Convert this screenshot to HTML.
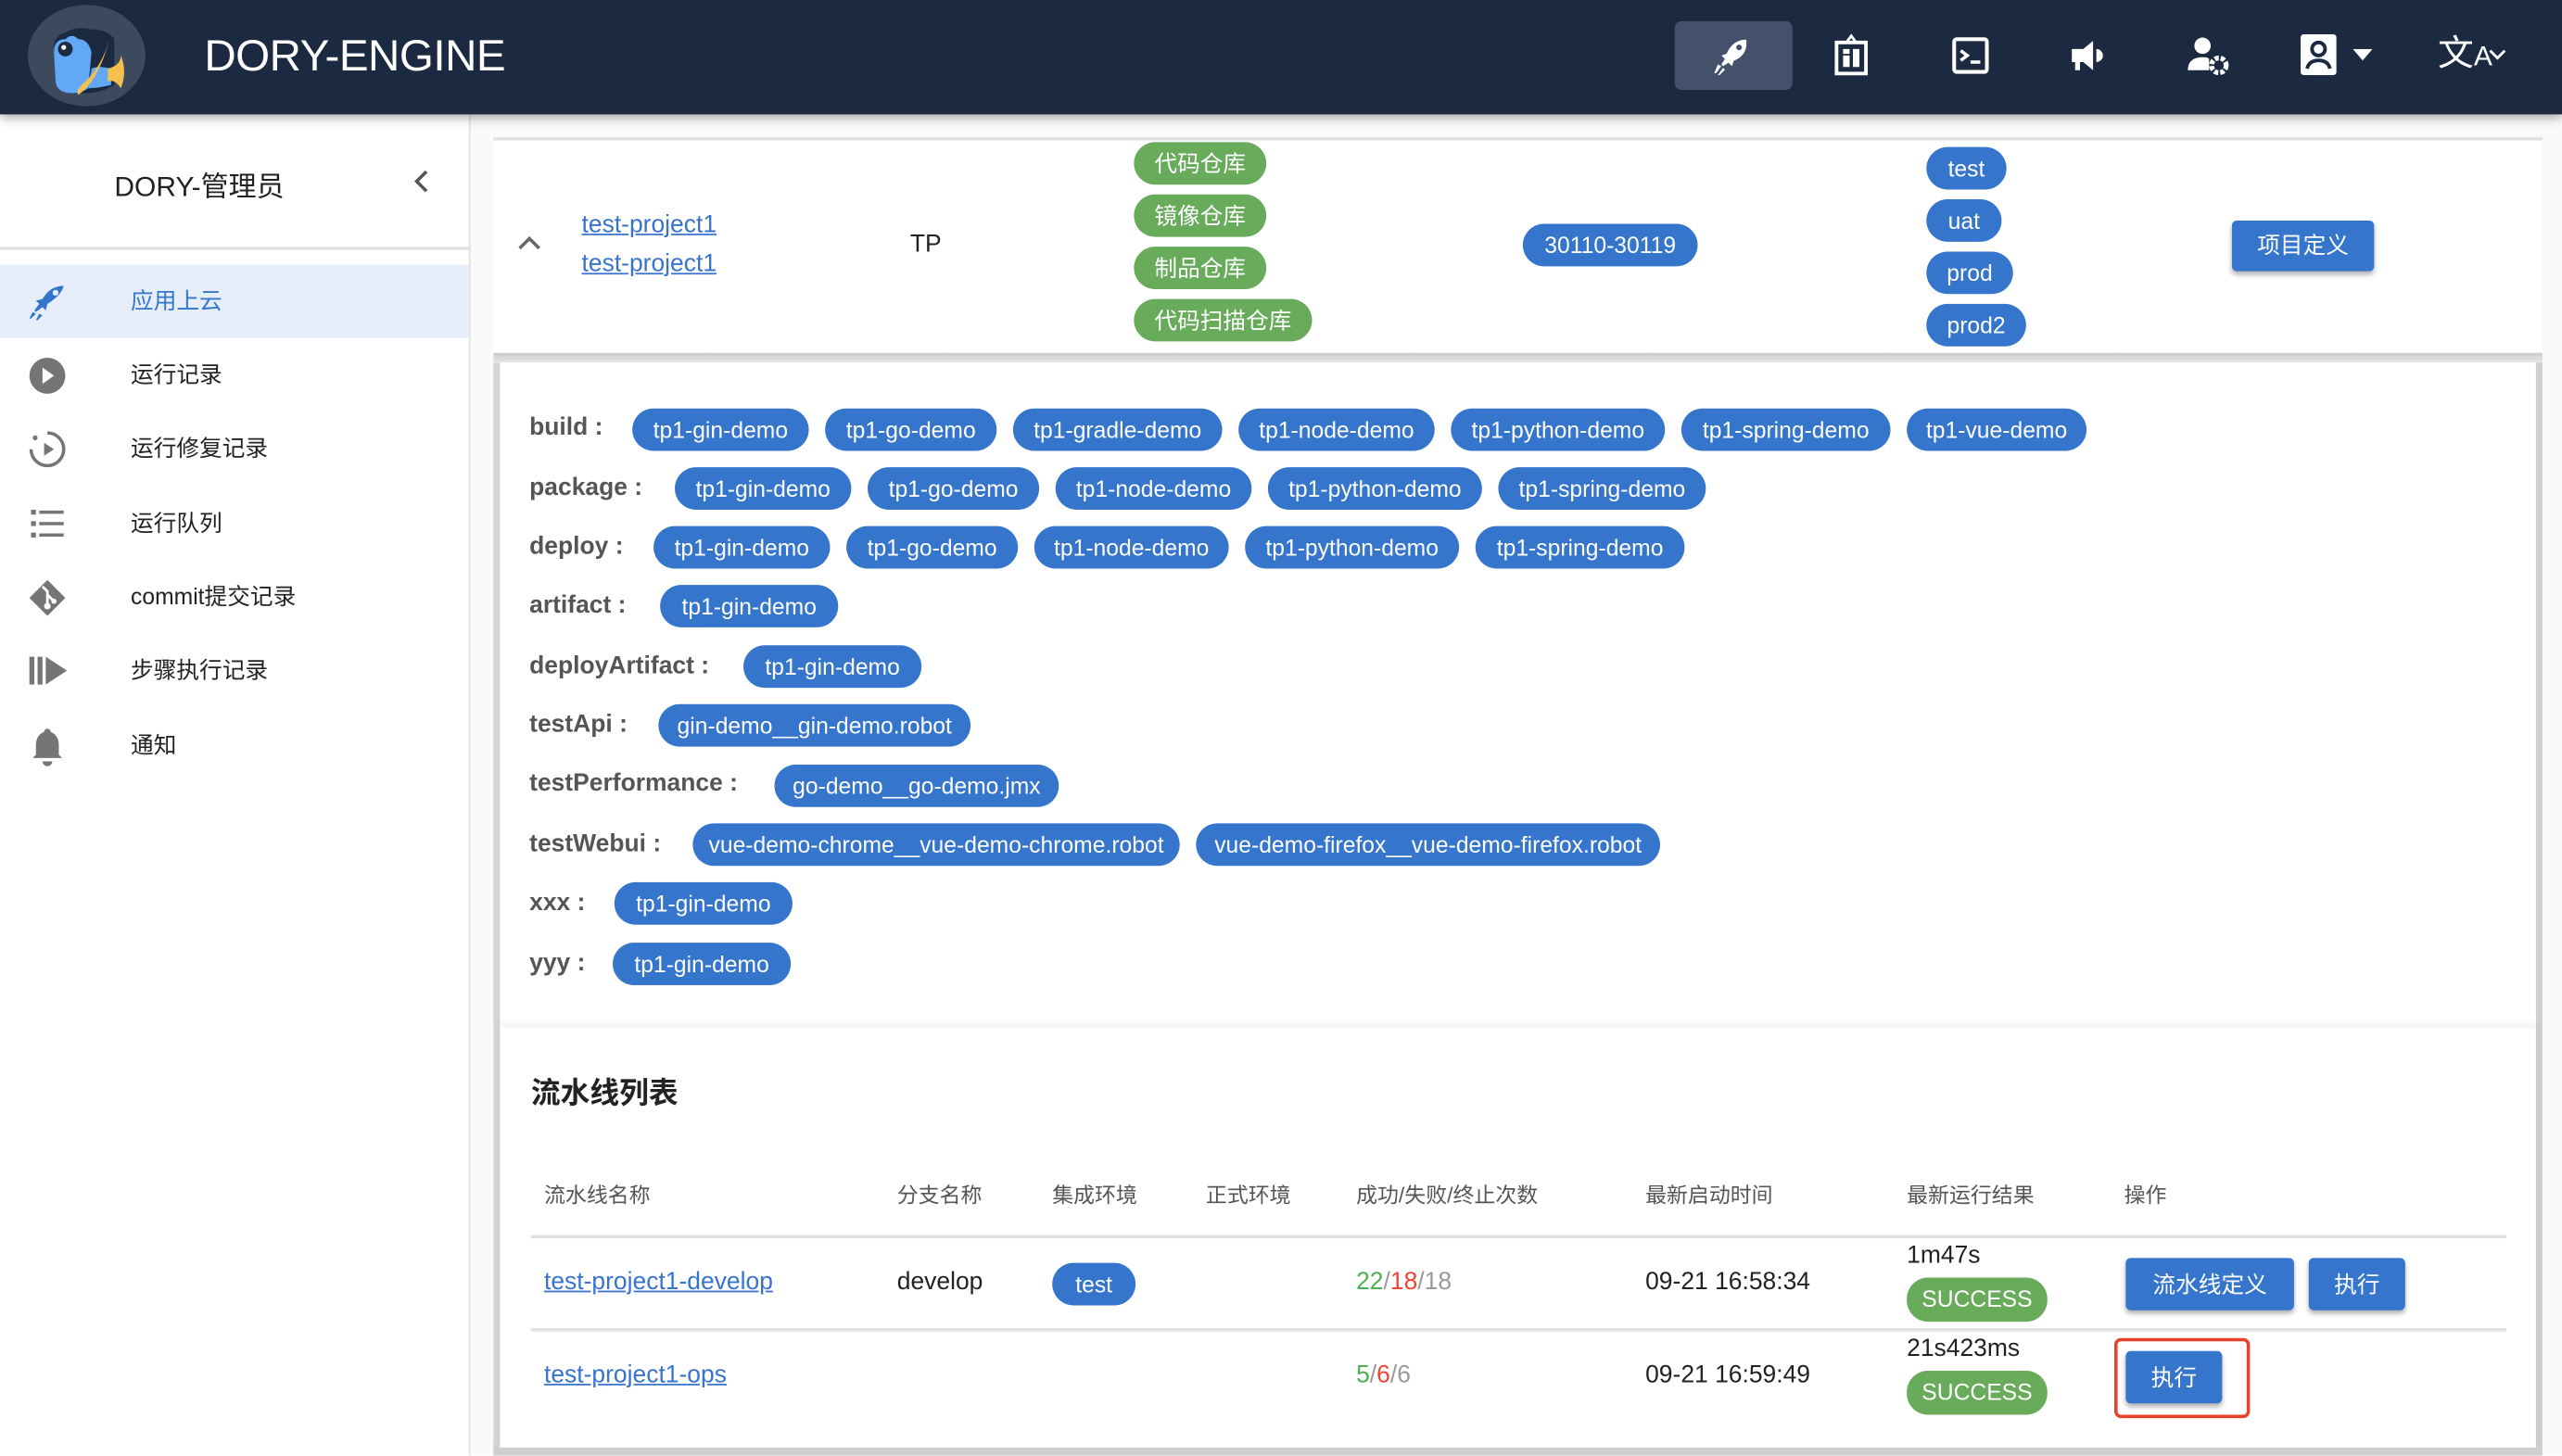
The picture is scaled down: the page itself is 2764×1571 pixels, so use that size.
<!DOCTYPE html>
<html><head><meta charset="utf-8">
<style>
html,body{margin:0;padding:0;width:2764px;height:1570px;overflow:hidden;background:#fff;}
#s{position:absolute;left:0;top:0;width:1568px;height:891px;transform:scale(1.76276);transform-origin:0 0;font-family:"Liberation Sans","Noto Sans CJK SC",sans-serif;color:#222;}
.a{position:absolute;}
.hdr{left:0;top:0;width:1568px;height:70px;background:#1b2941;box-shadow:0 2px 6px rgba(0,0,0,.35);z-index:5;}
.side{left:0;top:70px;width:287px;height:821px;background:#fff;border-right:1px solid #e0e0e0;}
.item{position:absolute;left:0;width:287px;height:45px;font-size:14px;line-height:45px;}
.item span{position:absolute;left:80px;}
.item svg{position:absolute;left:17px;top:11px;}
.chip{position:absolute;height:26px;line-height:26px;border-radius:13px;color:#fff;font-size:14px;text-align:center;white-space:nowrap;}
.b{background:#3576cc;}
.g{background:#67ab5b;}
.lbl{position:absolute;left:324px;font-size:15px;font-weight:bold;color:#555;line-height:26px;}
.th{position:absolute;top:721px;font-size:13px;color:#555;}
.btn{position:absolute;height:32px;line-height:32px;background:#3576cc;color:#fff;font-size:14px;text-align:center;border-radius:3px;box-shadow:0 2px 3px rgba(0,0,0,.3);}
a{color:#3873cf;text-decoration:underline;}
</style></head><body><div id="s">
<div class="a hdr">
 <svg class="a" style="left:16px;top:2px" width="74" height="64" viewBox="0 0 74 64">
  <ellipse cx="37" cy="32" rx="36" ry="31" fill="#3d4a5e"/>
  <path d="M17 30 Q16 20 24 18 Q30 14 40 16 Q50 16 54 22 L54 50 Q45 56 30 55 Q20 55 18 48 Z" fill="#1b2941"/>
  <path d="M17 30 Q17 22 24 22 Q28 18 32 22 Q38 22 40 30 L38 52 Q34 55 28 55 Q19 55 18 48 Z" fill="#62a8f6"/>
  <circle cx="24" cy="28" r="4.5" fill="#1b2941"/><circle cx="23" cy="27" r="1.5" fill="#fff"/>
  <path d="M38 52 Q44 52 52 50 L52 40 Q44 38 40 40 Z" fill="#62a8f6"/>
  <path d="M51 22 Q46 40 34 50 Q30 54 32 56 Q44 48 51 22Z" fill="#f5c14e"/>
  <path d="M50 40 Q58 38 58 32 Q62 42 58 52 Q54 46 50 48 Z" fill="#f5c14e"/>
 </svg>
 <div class="a" style="left:125px;top:14px;font-size:27px;letter-spacing:-0.3px;color:#fff;line-height:40px;">DORY-ENGINE</div>
 <div class="a" style="left:1025px;top:13px;width:72px;height:42px;background:#44516a;border-radius:4px;"></div>
 <svg class="a" style="left:1047px;top:21px" width="26" height="26" viewBox="0 0 24 24" fill="#fff"><path d="M20 3c-5 0-9 3-11 8l-3 1 2 2-2 3 1 1 3-2 2 2 1-3c5-2 8-6 7-12zm-4 6a1.6 1.6 0 1 1 0-3.2A1.6 1.6 0 0 1 16 9zM4 17l-2 5 1 0 3-4zm3 2l-3 4 1 0 3-3z"/></svg>
 <svg class="a" style="left:1121px;top:20px" width="24" height="28" viewBox="0 0 24 28"><path d="M12 2l3 4H9z" fill="none" stroke="#fff" stroke-width="1.6"/><rect x="3" y="6" width="18" height="19" fill="none" stroke="#fff" stroke-width="2.2"/><rect x="7" y="14" width="4" height="7" fill="#fff"/><rect x="13" y="10" width="4" height="11" fill="#fff"/><rect x="7" y="10" width="4" height="3" fill="#fff"/></svg>
 <svg class="a" style="left:1194px;top:22px" width="24" height="24" viewBox="0 0 24 24"><rect x="2" y="2" width="20" height="20" rx="1.5" fill="none" stroke="#fff" stroke-width="2.3"/><path d="M6 9l4 3-4 3" fill="none" stroke="#fff" stroke-width="2"/><rect x="12" y="15" width="6" height="2" fill="#fff"/></svg>
 <svg class="a" style="left:1266px;top:22px" width="24" height="24" viewBox="0 0 24 24" fill="#fff"><path d="M2 8h7l6-5v18l-6-5H7v5H4v-5H2z"/><path d="M17 8a4 4 0 0 1 0 8z"/></svg>
 <svg class="a" style="left:1338px;top:21px" width="28" height="26" viewBox="0 0 28 26" fill="#fff"><circle cx="10" cy="7" r="5"/><path d="M1 22c0-6 4-8 9-8 2 0 3 0 4 1v7z"/><circle cx="20" cy="19" r="4.5" fill="none" stroke="#fff" stroke-width="3" stroke-dasharray="2.5 1.2"/></svg>
 <svg class="a" style="left:1408px;top:21px" width="22" height="25" viewBox="0 0 22 25"><rect x="0" y="0" width="22" height="25" rx="2" fill="#fff"/><circle cx="11" cy="9" r="4" fill="none" stroke="#1b2941" stroke-width="2.2"/><path d="M4 21c1-4 4-5 7-5s6 1 7 5" fill="none" stroke="#1b2941" stroke-width="2.2"/></svg>
 <svg class="a" style="left:1440px;top:30px" width="12" height="8" viewBox="0 0 12 8"><path d="M0 0h12L6 7z" fill="#fff"/></svg>
 <div class="a" style="left:1492px;top:18px;color:#fff;font-size:22px;line-height:30px;">文<span style="font-size:17px;">A</span></div>
 <svg class="a" style="left:1523px;top:30px" width="11" height="8" viewBox="0 0 11 8"><path d="M1 1l4.5 4.5L10 1" fill="none" stroke="#fff" stroke-width="1.6"/></svg>
</div>

<div class="a side">
 <div class="a" style="left:70px;top:30px;font-size:17px;">DORY-管理员</div>
 <svg class="a" style="left:252px;top:33px" width="12" height="16" viewBox="0 0 12 16"><path d="M9 2L3 8l6 6" fill="none" stroke="#555" stroke-width="2"/></svg>
 <div class="a" style="left:0;top:81px;width:287px;height:2px;background:#e3e3e3;"></div>
 <div class="item" style="top:92px;background:#e6eef9;color:#3576cc;"><svg width="24" height="24" viewBox="0 0 24 24" fill="#3576cc"><path d="M22 2c-6 0-10 3-13 8l-4 1 2 2-3 4 1 1 4-3 2 2 1-4c5-3 9-7 10-11zm-5 6a1.8 1.8 0 1 1 0-3.6A1.8 1.8 0 0 1 17 8zM3 18l-2 4h1l3-3zm4 1l-2 4 1 0 3-3z"/></svg><span>应用上云</span></div>
 <div class="item" style="top:137px;"><svg width="24" height="24" viewBox="0 0 24 24"><circle cx="12" cy="12" r="11" fill="#757575"/><path d="M9 7l7 5-7 5z" fill="#fff"/></svg><span>运行记录</span></div>
 <div class="item" style="top:182px;"><svg width="24" height="24" viewBox="0 0 24 24"><path d="M12 2a10 10 0 1 1-10 10" fill="none" stroke="#757575" stroke-width="2"/><circle cx="4.5" cy="5" r="1.5" fill="#757575"/><path d="M10 8l6 4-6 4z" fill="#757575"/></svg><span>运行修复记录</span></div>
 <div class="item" style="top:228px;"><svg width="24" height="24" viewBox="0 0 24 24" fill="#757575"><rect x="2" y="3" width="3" height="3"/><rect x="2" y="10" width="3" height="3"/><rect x="2" y="17" width="3" height="3"/><rect x="7" y="3.5" width="15" height="2"/><rect x="7" y="10.5" width="15" height="2"/><rect x="7" y="17.5" width="15" height="2"/></svg><span>运行队列</span></div>
 <div class="item" style="top:273px;"><svg width="24" height="24" viewBox="0 0 24 24"><path d="M12 1l11 11-11 11L1 12z" fill="#757575"/><path d="M9 5l3 3v9M12 10l4 4" stroke="#fff" stroke-width="1.6" fill="none"/><circle cx="12" cy="17" r="2" fill="#fff"/><circle cx="16" cy="14" r="1.6" fill="#fff"/></svg><span>commit提交记录</span></div>
 <div class="item" style="top:318px;"><svg width="26" height="24" viewBox="0 0 26 24" fill="#757575"><rect x="1" y="3" width="3" height="17"/><rect x="6" y="3" width="3" height="17"/><path d="M11 3l13 8.5L11 20z"/></svg><span>步骤执行记录</span></div>
 <div class="item" style="top:364px;"><svg width="24" height="24" viewBox="0 0 24 24" fill="#757575"><path d="M12 1a2 2 0 0 1 2 2c3 1 5 4 5 8v6l2 2H3l2-2v-6c0-4 2-7 5-8a2 2 0 0 1 2-2z"/><path d="M9 21h6a3 3 0 0 1-6 0z"/></svg><span>通知</span></div>
</div>

<!-- main -->
<div class="a" style="left:288px;top:70px;width:1280px;height:821px;background:#fafafa;"></div>
<div class="a" style="left:302px;top:84px;width:1254px;height:132px;background:#fff;border-top:2px solid #e0e0e0;"></div>
<svg class="a" style="left:317px;top:144px" width="14" height="10" viewBox="0 0 14 10"><path d="M1 8l6-6 6 6" fill="none" stroke="#666" stroke-width="2"/></svg>
<a class="a" style="left:356px;top:129px;font-size:15px;">test-project1</a>
<a class="a" style="left:356px;top:153px;font-size:15px;">test-project1</a>
<div class="a" style="left:557px;top:141px;font-size:15px;">TP</div>
<div class="chip g" style="left:694px;top:87px;width:81px;">代码仓库</div>
<div class="chip g" style="left:694px;top:119px;width:81px;">镜像仓库</div>
<div class="chip g" style="left:694px;top:151px;width:81px;">制品仓库</div>
<div class="chip g" style="left:694px;top:183px;width:109px;">代码扫描仓库</div>
<div class="chip b" style="left:932px;top:137px;width:107px;">30110-30119</div>
<div class="chip b" style="left:1179px;top:90px;width:49px;">test</div>
<div class="chip b" style="left:1179px;top:122px;width:46px;">uat</div>
<div class="chip b" style="left:1179px;top:154px;width:53px;">prod</div>
<div class="chip b" style="left:1179px;top:186px;width:61px;">prod2</div>
<div class="btn" style="left:1366px;top:135px;width:87px;height:31px;line-height:31px;">项目定义</div>

<div class="a" style="left:302px;top:216px;width:1254px;height:6px;background:linear-gradient(#ccc,#e6e6e6);"></div>
<div class="a" style="left:302px;top:222px;width:4px;height:667px;background:#d4d4d4;"></div>
<div class="a" style="left:1552px;top:222px;width:4px;height:667px;background:#cfcfcf;"></div>
<div class="a" style="left:306px;top:222px;width:1246px;height:407px;background:#fff;"></div>
<div class="a" style="left:306px;top:629px;width:1246px;height:259px;background:#fff;box-shadow:0 -3px 4px rgba(0,0,0,.05);"></div>
<div class="a" style="left:302px;top:886px;width:1254px;height:5px;background:#cfcfcf;"></div>

<div class="lbl" style="top:249px;">build :</div>
<div class="chip b" style="left:387px;top:250px;width:108px;">tp1-gin-demo</div>
<div class="chip b" style="left:505px;top:250px;width:105px;">tp1-go-demo</div>
<div class="chip b" style="left:620px;top:250px;width:128px;">tp1-gradle-demo</div>
<div class="chip b" style="left:758px;top:250px;width:120px;">tp1-node-demo</div>
<div class="chip b" style="left:888px;top:250px;width:131px;">tp1-python-demo</div>
<div class="chip b" style="left:1029px;top:250px;width:128px;">tp1-spring-demo</div>
<div class="chip b" style="left:1167px;top:250px;width:110px;">tp1-vue-demo</div>

<div class="lbl" style="top:286px;">package :</div>
<div class="chip b" style="left:413px;top:286px;width:108px;">tp1-gin-demo</div>
<div class="chip b" style="left:531px;top:286px;width:105px;">tp1-go-demo</div>
<div class="chip b" style="left:646px;top:286px;width:120px;">tp1-node-demo</div>
<div class="chip b" style="left:776px;top:286px;width:131px;">tp1-python-demo</div>
<div class="chip b" style="left:917px;top:286px;width:127px;">tp1-spring-demo</div>

<div class="lbl" style="top:322px;">deploy :</div>
<div class="chip b" style="left:400px;top:322px;width:108px;">tp1-gin-demo</div>
<div class="chip b" style="left:518px;top:322px;width:105px;">tp1-go-demo</div>
<div class="chip b" style="left:633px;top:322px;width:119px;">tp1-node-demo</div>
<div class="chip b" style="left:762px;top:322px;width:131px;">tp1-python-demo</div>
<div class="chip b" style="left:903px;top:322px;width:128px;">tp1-spring-demo</div>

<div class="lbl" style="top:358px;">artifact :</div>
<div class="chip b" style="left:404px;top:358px;width:109px;">tp1-gin-demo</div>
<div class="lbl" style="top:395px;">deployArtifact :</div>
<div class="chip b" style="left:455px;top:395px;width:109px;">tp1-gin-demo</div>
<div class="lbl" style="top:431px;">testApi :</div>
<div class="chip b" style="left:403px;top:431px;width:191px;">gin-demo__gin-demo.robot</div>
<div class="lbl" style="top:467px;">testPerformance :</div>
<div class="chip b" style="left:474px;top:468px;width:174px;">go-demo__go-demo.jmx</div>
<div class="lbl" style="top:504px;">testWebui :</div>
<div class="chip b" style="left:424px;top:504px;width:298px;">vue-demo-chrome__vue-demo-chrome.robot</div>
<div class="chip b" style="left:732px;top:504px;width:284px;">vue-demo-firefox__vue-demo-firefox.robot</div>
<div class="lbl" style="top:540px;">xxx :</div>
<div class="chip b" style="left:376px;top:540px;width:109px;">tp1-gin-demo</div>
<div class="lbl" style="top:577px;">yyy :</div>
<div class="chip b" style="left:375px;top:577px;width:109px;">tp1-gin-demo</div>

<div class="a" style="left:325px;top:655px;font-size:18px;font-weight:bold;color:#222;">流水线列表</div>
<div class="th" style="left:333px;">流水线名称</div>
<div class="th" style="left:549px;">分支名称</div>
<div class="th" style="left:644px;">集成环境</div>
<div class="th" style="left:738px;">正式环境</div>
<div class="th" style="left:830px;">成功/失败/终止次数</div>
<div class="th" style="left:1007px;">最新启动时间</div>
<div class="th" style="left:1167px;">最新运行结果</div>
<div class="th" style="left:1300px;">操作</div>
<div class="a" style="left:325px;top:756px;width:1209px;height:2px;background:#e0e0e0;"></div>
<div class="a" style="left:325px;top:813px;width:1209px;height:2px;background:#e0e0e0;"></div>

<a class="a" style="left:333px;top:776px;font-size:15px;">test-project1-develop</a>
<div class="a" style="left:549px;top:776px;font-size:15px;">develop</div>
<div class="chip b" style="left:644px;top:773px;width:51px;">test</div>
<div class="a" style="left:830px;top:776px;font-size:15px;color:#999;"><span style="color:#4caf50">22</span>/<span style="color:#f44336">18</span>/18</div>
<div class="a" style="left:1007px;top:776px;font-size:15px;">09-21 16:58:34</div>
<div class="a" style="left:1167px;top:760px;font-size:15px;">1m47s</div>
<div class="chip g" style="left:1167px;top:782px;width:86px;height:27px;line-height:27px;">SUCCESS</div>
<div class="btn" style="left:1301px;top:770px;width:103px;">流水线定义</div>
<div class="btn" style="left:1413px;top:770px;width:59px;">执行</div>

<a class="a" style="left:333px;top:833px;font-size:15px;">test-project1-ops</a>
<div class="a" style="left:830px;top:833px;font-size:15px;color:#999;"><span style="color:#4caf50">5</span>/<span style="color:#f44336">6</span>/6</div>
<div class="a" style="left:1007px;top:833px;font-size:15px;">09-21 16:59:49</div>
<div class="a" style="left:1167px;top:817px;font-size:15px;">21s423ms</div>
<div class="chip g" style="left:1167px;top:839px;width:86px;height:27px;line-height:27px;">SUCCESS</div>
<div class="a" style="left:1294px;top:819px;width:79px;height:45px;border:2px solid #e8412b;border-radius:4px;"></div>
<div class="btn" style="left:1301px;top:827px;width:59px;">执行</div>
</div></body></html>
